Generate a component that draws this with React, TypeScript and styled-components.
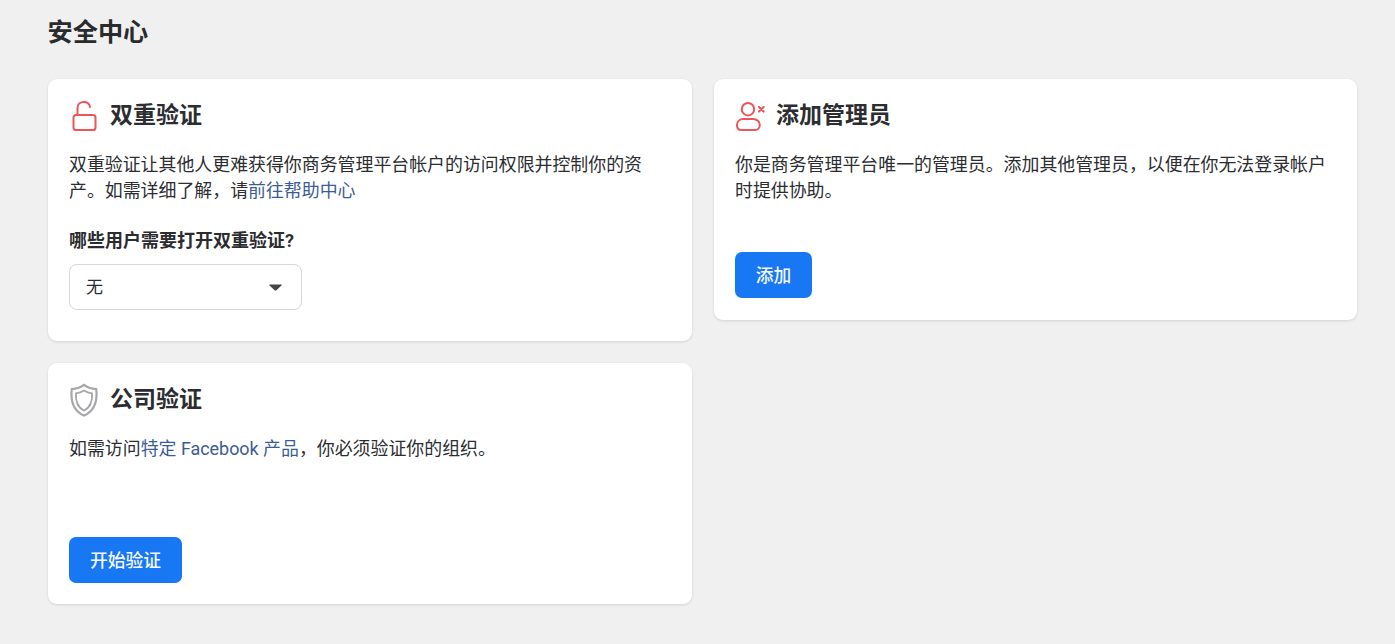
import React from 'react';
import styled, { createGlobalStyle } from 'styled-components';

const Global = createGlobalStyle`
  html, body { margin: 0; padding: 0; background: #f0f0f0; }
  body { font-family: Roboto, "Noto Sans CJK SC", sans-serif; color: #1c1e21; }
  * { box-sizing: border-box; }
`;

const Page = styled.div`
  width: 1395px;
  height: 644px;
  overflow: hidden;
  padding: 16px 38px 0 48px;
`;
const PageTitle = styled.h1`
  margin: 0 0 30px -0.5px;
  font-size: 25.2px;
  line-height: 33px;
  font-weight: 700;
  color: #2a2b2d;
`;
const Columns = styled.div`
  display: grid;
  grid-template-columns: 644px 643px;
  column-gap: 22px;
  align-items: start;
`;
const Column = styled.div`
  display: flex;
  flex-direction: column;
  gap: 22px;
`;
const Card = styled.section<{ $height: number; $bottom?: number }>`
  height: ${p => p.$height}px;
  padding: 19px 21px ${p => p.$bottom ?? 21}px;
  background: #fff;
  border-radius: 9px;
  box-shadow: 0 1px 3px rgba(0, 0, 0, 0.12);
  display: flex;
  flex-direction: column;
`;
const CardHead = styled.div`
  display: flex;
  align-items: center;
  gap: 11px;
  height: 36px;
  margin-bottom: 18px;
`;
const CardTitle = styled.h2`
  margin: 0;
  font-size: 23px;
  line-height: 36px;
  font-weight: 700;
  color: #2c2d30;
`;
const Body = styled.p`
  margin: 0;
  font-size: 17.92px;
  line-height: 26px;
  color: #2b2d31;
`;
const Link = styled.a`
  color: #3b5c96;
  text-decoration: none;
`;
const Question = styled.div`
  margin-top: 24px;
  font-size: 18px;
  line-height: 26px;
  font-weight: 700;
  color: #2b2c2f;
`;
const SelectBox = styled.div`
  margin-top: 10px;
  width: 233px;
  height: 46px;
  padding: 0 19px 0 16px;
  display: flex;
  align-items: center;
  justify-content: space-between;
  border: 1px solid #d6d7da;
  border-radius: 8px;
  background: #fff;
  font-size: 17px;
  color: #2b2d31;
`;
const SelectValue = styled.span`
  margin-bottom: 4px;
`;
const Button = styled.button<{ $width: number }>`
  margin-top: auto;
  align-self: flex-start;
  height: 46px;
  padding: 0 0 3px;
  width: ${p => p.$width}px;
  border: 0;
  border-radius: 7px;
  background: #1877f2;
  color: #f4f8ff;
  font-family: inherit;
  font-size: 17.8px;
  font-weight: 500;
`;
const IconWrap = styled.svg`
  flex: none;
  display: block;
`;

const LockIcon = () => (
  <IconWrap width="30" height="32" viewBox="0 0 30 32" fill="none" stroke="#ea5659" strokeWidth="2">
    <rect x="4.500" y="15" width="22" height="15" rx="2.600" />
    <path d="M8.500 15V8C8.500 4.300 11.300 2 14.800 2c3.200 0 5.700 2 6.200 5" strokeLinecap="round" />
  </IconWrap>
);
const UserIcon = () => (
  <IconWrap width="30" height="32" viewBox="0 0 30 32" fill="none" stroke="#ea5659" strokeWidth="2" strokeLinecap="round">
    <circle cx="13" cy="9.200" r="6.200" />
    <path d="M8.500 19h9.500c4 0 6.800 2.700 6.800 6 0 3-2 5-4.500 5h-14C3.800 30 2 28 2 25c0-3.300 2.500-6 6.500-6z" />
    <path d="M24 7l4.600 4.600M28.600 7L24 11.600" strokeWidth="2.100" />
  </IconWrap>
);
const ShieldIcon = () => (
  <IconWrap width="30" height="34" viewBox="0 0 30 34" fill="none" stroke="#a6a7a9">
    <path strokeWidth="2.200" d="M15 1.800c3.200 2.500 7.400 3.900 12.200 4.300 1.400 11.500-1.400 21.600-12.200 26.500C4.200 27.700 1.400 17.600 2.800 6.100 7.600 5.700 11.800 4.300 15 1.800z" />
    <path strokeWidth="1.800" d="M15 7.500c2.400 1.500 5 2.400 8 2.800.6 7.700-1.300 14-8 17.300-6.700-3.300-8.600-9.600-8-17.300 3-.4 5.600-1.300 8-2.800z" />
  </IconWrap>
);
const Caret = () => (
  <IconWrap width="13" height="7" viewBox="0 0 13 7" fill="#444548">
    <path d="M1 .4h11c.7 0 1 .7.5 1.200L7.400 6.300c-.5.400-1.300.400-1.800 0L.5 1.600C0 1.100.3.400 1 .4z" />
  </IconWrap>
);

export default function App() {
  return (
    <Page>
      <Global />
      <PageTitle>安全中心</PageTitle>
      <Columns>
        <Column>
          <Card $height={262}>
            <CardHead>
              <LockIcon />
              <CardTitle>双重验证</CardTitle>
            </CardHead>
            <Body>
              双重验证让其他人更难获得你商务管理平台帐户的访问权限并控制你的资产。如需详细了解，请<Link href="#">前往帮助中心</Link>
            </Body>
            <Question>哪些用户需要打开双重验证?</Question>
            <SelectBox>
              <SelectValue>无</SelectValue>
              <Caret />
            </SelectBox>
          </Card>
          <Card $height={241}>
            <CardHead>
              <ShieldIcon />
              <CardTitle>公司验证</CardTitle>
            </CardHead>
            <Body>
              如需访问<Link href="#">特定 Facebook 产品</Link>，你必须验证你的组织。
            </Body>
            <Button $width={113}>开始验证</Button>
          </Card>
        </Column>
        <Column>
          <Card $height={241} $bottom={22}>
            <CardHead>
              <UserIcon />
              <CardTitle>添加管理员</CardTitle>
            </CardHead>
            <Body>
              你是商务管理平台唯一的管理员。添加其他管理员，以便在你无法登录帐户时提供协助。
            </Body>
            <Button $width={77}>添加</Button>
          </Card>
        </Column>
      </Columns>
    </Page>
  );
}
